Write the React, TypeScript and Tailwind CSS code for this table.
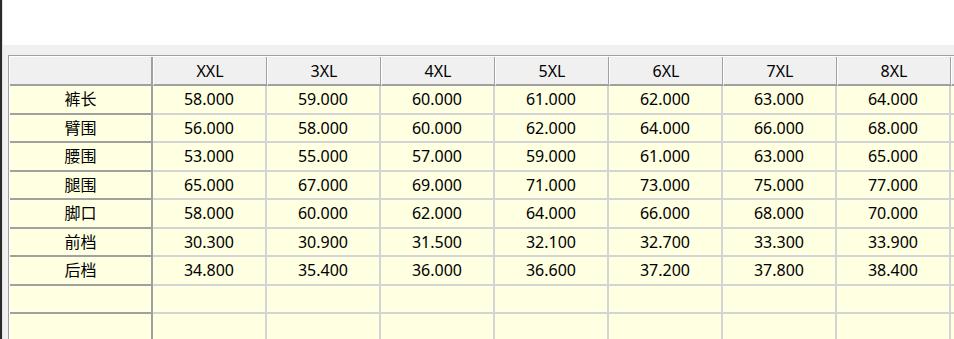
import React from "react";

const sizes = ["XXL", "3XL", "4XL", "5XL", "6XL", "7XL", "8XL"];

const rows: [string, string[]][] = [
  ["裤长", ["58.000", "59.000", "60.000", "61.000", "62.000", "63.000", "64.000"]],
  ["臂围", ["56.000", "58.000", "60.000", "62.000", "64.000", "66.000", "68.000"]],
  ["腰围", ["53.000", "55.000", "57.000", "59.000", "61.000", "63.000", "65.000"]],
  ["腿围", ["65.000", "67.000", "69.000", "71.000", "73.000", "75.000", "77.000"]],
  ["脚口", ["58.000", "60.000", "62.000", "64.000", "66.000", "68.000", "70.000"]],
  ["前档", ["30.300", "30.900", "31.500", "32.100", "32.700", "33.300", "33.900"]],
  ["后档", ["34.800", "35.400", "36.000", "36.600", "37.200", "37.800", "38.400"]],
  ["", ["", "", "", "", "", "", ""]],
  ["", ["", "", "", "", "", "", ""]],
];

function HeaderRow() {
  return (
    <div className="flex h-[29px] shrink-0 bg-[#f0f0f0]">
      <div className="w-[143px] shrink-0 border-r-2 border-b-2 border-[#a0a0a0]" />
      {sizes.map((s) => (
        <div
          key={s}
          className="w-[114px] shrink-0 flex items-center justify-center border-l border-l-white border-r border-r-[#a0a0a0] border-b-2 border-b-[#a0a0a0]"
        >
          {s}
        </div>
      ))}
      <div className="flex-1 border-l border-l-white border-b-2 border-b-[#a0a0a0]" />
    </div>
  );
}

function DataRow({ label, values }: { label: string; values: string[] }) {
  return (
    <div className="flex h-[28.5px] shrink-0 bg-[#ffffe1]">
      <div className="w-[143px] shrink-0 flex items-center justify-center border-r-2 border-b-2 border-[#a0a0a0]">
        {label}
      </div>
      {values.map((v, i) => (
        <div
          key={i}
          className="w-[114px] shrink-0 flex items-center justify-center border-r-2 border-b-2 border-[#d4d4d4]"
        >
          {v}
        </div>
      ))}
      <div className="flex-1 border-b-2 border-[#d4d4d4]" />
    </div>
  );
}

export default function App() {
  return (
    <div
      className="w-[954px] h-[339px] flex overflow-hidden bg-white text-[16px] text-black"
      style={{ fontFamily: '"Noto Sans", "Noto Sans CJK SC", sans-serif' }}
    >
      <div className="w-[2px] shrink-0 bg-[#2a2a2a]" />
      <div className="w-[1px] shrink-0 bg-[#e0e0e0]" />
      <div className="flex-1 flex flex-col">
        <div className="h-[45px] shrink-0 bg-white" />
        <div className="flex-1 bg-[#f0f0f0] pt-[10px] pl-[5px] overflow-hidden">
          <div className="h-full border-l border-t border-[#a0a0a0]">
            <div className="h-full border-l border-t border-white flex flex-col overflow-hidden">
              <HeaderRow />
              {rows.map(([label, values], i) => (
                <DataRow key={i} label={label} values={values} />
              ))}
            </div>
          </div>
        </div>
      </div>
    </div>
  );
}
